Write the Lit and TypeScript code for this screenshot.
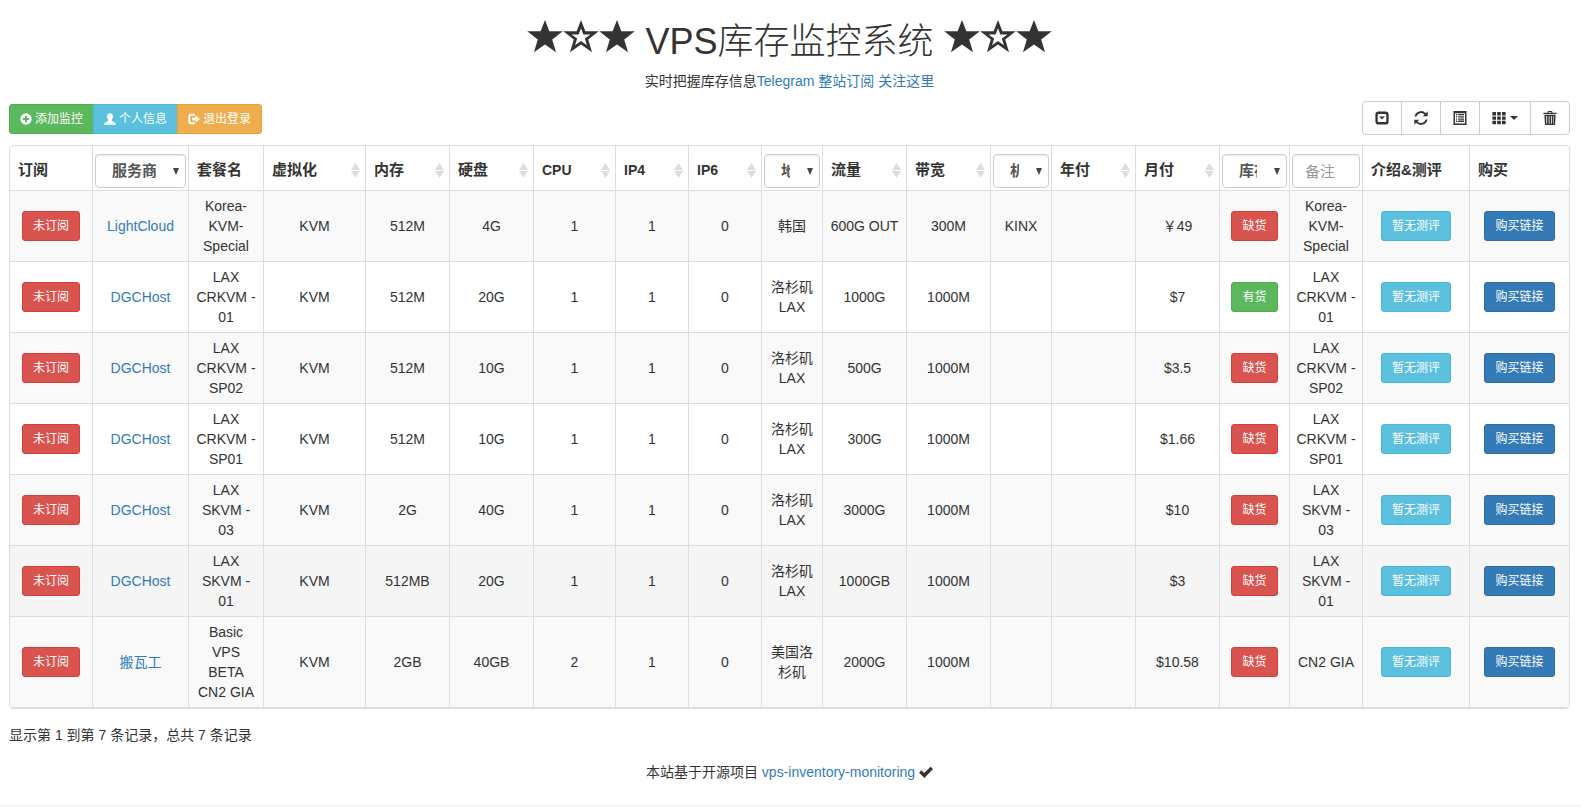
import { LitElement, html, css, svg } from "lit";
import { customElement } from "lit/decorators.js";
import { classMap } from "lit/directives/class-map.js";

interface Plan {
  vendor: string;
  name: string;
  ram: string;
  disk: string;
  cpu: string;
  place: string;
  traffic: string;
  speed: string;
  room: string;
  monthly: string;
  inStock: boolean;
}

const plans: Plan[] = [
  { vendor: "LightCloud", name: "Korea-KVM-Special", ram: "512M", disk: "4G", cpu: "1", place: "韩国", traffic: "600G OUT", speed: "300M", room: "KINX", monthly: "￥49", inStock: false },
  { vendor: "DGCHost", name: "LAX CRKVM - 01", ram: "512M", disk: "20G", cpu: "1", place: "洛杉矶 LAX", traffic: "1000G", speed: "1000M", room: "", monthly: "$7", inStock: true },
  { vendor: "DGCHost", name: "LAX CRKVM - SP02", ram: "512M", disk: "10G", cpu: "1", place: "洛杉矶 LAX", traffic: "500G", speed: "1000M", room: "", monthly: "$3.5", inStock: false },
  { vendor: "DGCHost", name: "LAX CRKVM - SP01", ram: "512M", disk: "10G", cpu: "1", place: "洛杉矶 LAX", traffic: "300G", speed: "1000M", room: "", monthly: "$1.66", inStock: false },
  { vendor: "DGCHost", name: "LAX SKVM - 03", ram: "2G", disk: "40G", cpu: "1", place: "洛杉矶 LAX", traffic: "3000G", speed: "1000M", room: "", monthly: "$10", inStock: false },
  { vendor: "DGCHost", name: "LAX SKVM - 01", ram: "512MB", disk: "20G", cpu: "1", place: "洛杉矶 LAX", traffic: "1000GB", speed: "1000M", room: "", monthly: "$3", inStock: false },
  { vendor: "搬瓦工", name: "Basic VPS BETA CN2 GIA", ram: "2GB", disk: "40GB", cpu: "2", place: "美国洛杉矶", traffic: "2000G", speed: "1000M", room: "", monthly: "$10.58", inStock: false },
];

const notes: Record<string, string> = { "Basic VPS BETA CN2 GIA": "CN2 GIA" };

type Kind = "text" | "sort" | "select" | "input";
const columns: { label: string; kind: Kind; width: number }[] = [
  { label: "订阅", kind: "text", width: 83 },
  { label: "服务商", kind: "select", width: 96 },
  { label: "套餐名", kind: "text", width: 75 },
  { label: "虚拟化", kind: "sort", width: 102 },
  { label: "内存", kind: "sort", width: 84 },
  { label: "硬盘", kind: "sort", width: 84 },
  { label: "CPU", kind: "sort", width: 82 },
  { label: "IP4", kind: "sort", width: 73 },
  { label: "IP6", kind: "sort", width: 73 },
  { label: "地区", kind: "select", width: 61 },
  { label: "流量", kind: "sort", width: 84 },
  { label: "带宽", kind: "sort", width: 84 },
  { label: "机房", kind: "select", width: 61 },
  { label: "年付", kind: "sort", width: 84 },
  { label: "月付", kind: "sort", width: 84 },
  { label: "库存", kind: "select", width: 70 },
  { label: "备注", kind: "input", width: 73 },
  { label: "介绍&测评", kind: "text", width: 107 },
  { label: "购买", kind: "text", width: 99 },
];

// Glyphs are drawn on a 14-unit square.
const glyphs = {
  plus: svg`<path fill-rule="evenodd" d="M7 .4a6.6 6.6 0 1 0 0 13.2A6.6 6.6 0 0 0 7 .4zM5.8 3.4h2.4v2.4h2.4v2.4H8.2v2.4H5.8V8.2H3.400V5.800H5.800z"/>`,
  user: svg`<path d="M7 .2C5 .2 3.500 1.700 3.500 3.900c0 1.500.6 3 1.500 3.900.2.700.1 1.300-.5 1.600L1.300 11c-.8.4-1.100.8-1.100 1.500v1.200h13.600v-1.200c0-.7-.3-1.100-1.100-1.500L9.500 9.400c-.6-.3-.7-.9-.5-1.600.9-.9 1.500-2.400 1.500-3.900C10.500 1.700 9 .2 7 .2z"/>`,
  logout: svg`<path d="M8 1H3.200A2.700 2.700 0 0 0 .4 3.700v6.600A2.700 2.700 0 0 0 3.200 13H8v-2.200H3.500a.9.9 0 0 1-.9-.9V4.100c0-.5.4-.9.9-.9H8z"/><path d="M9 2.600 13.900 7 9 11.400V8.700H5V5.300h4z"/>`,
  collapse: svg`<path fill-rule="evenodd" d="M3.500.4h7a3.100 3.100 0 0 1 3.100 3.100v7a3.100 3.100 0 0 1-3.100 3.100h-7A3.100 3.100 0 0 1 .4 10.500v-7A3.100 3.100 0 0 1 3.500.4zM3.600 3a.9.9 0 0 0-.9.9v6.300c0 .5.4.9.9.9h6.800c.5 0 .9-.4.9-.9V3.900a.9.9 0 0 0-.9-.9z"/><path d="M4.200 5.400h5.600L7 8.600z"/>`,
  refresh: svg`<path d="M13.700.3v5H8.800l1.700-1.700A4.800 4.800 0 0 0 2.400 5.600H.5A6.700 6.700 0 0 1 11.900 2.200zM.3 13.700v-5h4.900l-1.700 1.700a4.800 4.800 0 0 0 8.100-2h1.900A6.700 6.700 0 0 1 2.100 11.800z"/>`,
  list: svg`<path fill-rule="evenodd" d="M.5 0h13v14H.5zM2 2.200v10.300h10V2.200z"/><path d="M3 3h1.200v1.300H3zm0 2.200h1.200v1.300H3zm0 2.200h1.200v1.300H3zm0 2.200h1.200v1.300H3zM5.200 3H11v1.300H5.200zm0 2.200H11v1.300H5.200zm0 2.200H11v1.300H5.200zm0 2.200H11v1.300H5.200z"/>`,
  grid: svg`<path d="M.4 1h3.600v3.400H.4zm4.800 0h3.600v3.400H5.200zM10 1h3.600v3.400H10zM.4 5.400h3.600v3.400H.4zm4.800 0h3.600v3.400H5.200zm4.800 0h3.600v3.400H10zM.4 9.800h3.600v3.400H.4zm4.800 0h3.600v3.400H5.200zm4.800 0h3.600v3.400H10z"/>`,
  trash: svg`<path fill-rule="evenodd" d="M4.600 1.800V.9c0-.5.4-.9.9-.9h3c.5 0 .9.400.9.900v.9H13c.4 0 .7.300.7.700v.6H.3v-.6c0-.4.3-.7.7-.7zm1.100 0h2.600V1H5.700z"/><path fill-rule="evenodd" d="M1.400 3.800h11.200l-.5 9.400a.9.9 0 0 1-.9.8H2.800a.9.9 0 0 1-.9-.8zM3.200 5l.2 7.800h.7V5zm2.500 0v7.800h.8V5zm2.500 0v7.800h.8V5zm2.200 0-.1 7.800h.5L11 5z"/>`,
  check: svg`<path d="M.1 7.800 2.400 5.300 5.200 7.900l6.400-6.200 2.400 2.400-8.600 8.800z"/>`,
  star: svg`<path d="M7 0l1.700 4.400h5.200L9.800 7.600l1.500 4.900L7 9.500l-4.300 3 1.500-4.900L.1 4.400h5.200z"/>`,
  starEmpty: svg`<path fill-rule="evenodd" d="M7 0l1.700 4.400h5.200L9.800 7.600l1.500 4.900L7 9.500l-4.300 3 1.500-4.900L.1 4.400h5.200zM7 3.200l-.9 2.400H3.300l2.200 1.600-.8 2.600L7 8.200l2.300 1.600-.8-2.600 2.200-1.600H7.900z"/>`,
};

const icon = (name: keyof typeof glyphs, size: string) =>
  html`<svg class=${"icon " + size} viewBox="0 0 14 14" aria-hidden="true">${glyphs[name]}</svg>`;

@customElement("app-root")
export class AppRoot extends LitElement {
  static styles = css`
    :host {
      display: block;
      font: 14px/20px "Liberation Sans", "Noto Sans CJK SC", sans-serif;
      color: #333;
      background: #fff;
    }
    * {
      box-sizing: border-box;
    }
    .page {
      padding: 20px 11px 0 9px;
    }
    a {
      color: #337ab7;
      text-decoration: none;
    }
    .icon {
      fill: currentColor;
      flex: none;
      width: 14px;
      height: 14px;
    }
    .icon.small {
      width: 12px;
      height: 12px;
    }
    .icon.large {
      width: 36px;
      height: 36px;
    }
    .icon.inline {
      vertical-align: -2px;
    }
    .title {
      display: flex;
      justify-content: center;
      gap: 10px;
      margin: 0 0 7px;
      font-size: 36px;
      line-height: 44px;
      font-weight: 300;
      white-space: nowrap;
    }
    .stars {
      display: flex;
    }
    .center {
      margin: 0;
      text-align: center;
    }
    .toolbar {
      display: flex;
      justify-content: space-between;
      align-items: flex-start;
      margin: 10px 0;
    }
    .group {
      display: flex;
    }
    .actions {
      margin-top: 3px;
    }
    .btn {
      display: inline-flex;
      align-items: center;
      justify-content: center;
      gap: 3px;
      height: 30px;
      margin: 0;
      padding: 0 10px;
      border: 1px solid;
      border-radius: 3px;
      font: 12px/18px "Liberation Sans", "Noto Sans CJK SC", sans-serif;
      color: #fff;
      white-space: nowrap;
      vertical-align: middle;
      cursor: pointer;
    }
    .danger {
      background: #d9534f;
      border-color: #d43f3a;
    }
    .success {
      background: #5cb85c;
      border-color: #4cae4c;
    }
    .info {
      background: #5bc0de;
      border-color: #46b8da;
    }
    .warning {
      background: #f0ad4e;
      border-color: #eea236;
    }
    .primary {
      background: #337ab7;
      border-color: #2e6da4;
    }
    .tool {
      height: 34px;
      padding: 0 12px;
      gap: 4px;
      border-color: #ccc;
      border-radius: 4px;
      background: #fff;
      color: #333;
    }
    .group .btn + .btn {
      margin-left: -1px;
      border-top-left-radius: 0;
      border-bottom-left-radius: 0;
    }
    .group .btn:not(:last-child) {
      border-top-right-radius: 0;
      border-bottom-right-radius: 0;
    }
    .caret {
      border: 4px solid transparent;
      border-top-color: currentColor;
      border-bottom: 0;
    }
    .frame {
      border: 1px solid #ddd;
      border-radius: 4px;
      overflow: hidden;
    }
    table {
      width: 100%;
      table-layout: fixed;
      border-collapse: separate;
      border-spacing: 0;
    }
    th,
    td {
      border: solid #ddd;
      border-width: 0 1px 1px 0;
    }
    th:last-child,
    td:last-child {
      border-right-width: 0;
    }
    th {
      padding: 0;
      text-align: left;
      vertical-align: bottom;
    }
    td {
      padding: 5px;
      text-align: center;
      vertical-align: middle;
    }
    tbody tr:nth-child(odd) {
      background: #f9f9f9;
    }
    tbody tr.active {
      background: #f5f5f5;
    }
    .head {
      display: flex;
      align-items: center;
      justify-content: space-between;
      padding: 0 5px 10px 8px;
      font-size: 15px;
      white-space: nowrap;
    }
    .head.latin {
      font-size: 14px;
    }
    .arrows {
      width: 9px;
      height: 15px;
      fill: #ddd;
    }
    .filter {
      padding: 8px 2px 2px;
    }
    .field {
      display: block;
      width: 100%;
      height: 34px;
      margin: 0;
      padding: 0 12px;
      border: 1px solid #ccc;
      border-radius: 4px;
      box-shadow: inset 0 1px 1px rgba(0, 0, 0, 0.075);
      font: 15px/20px "Liberation Sans", "Noto Sans CJK SC", sans-serif;
      color: #555;
      background-color: #fff;
    }
    .field::placeholder {
      color: #999;
      opacity: 1;
    }
    select.field {
      appearance: none;
      font-weight: bold;
      padding: 0 29px 0 16px;
      background-image: url("data:image/svg+xml,%3Csvg xmlns='http://www.w3.org/2000/svg' width='6' height='7'%3E%3Cpath d='M0 0h6L3 7z' fill='%23444'/%3E%3C/svg%3E");
      background-repeat: no-repeat;
      background-position: right 6px center;
    }
    .summary {
      margin: 16px 0 17px;
    }
    .rule {
      margin: 23px 0 0;
      border: 0;
      border-top: 1px solid #eee;
    }
  `;

  private header(c: (typeof columns)[number]) {
    if (c.kind === "select") {
      return html`<div class="filter">
        <select class="field" aria-label=${c.label}>
          <option>${c.label}</option>
        </select>
      </div>`;
    }
    if (c.kind === "input") {
      return html`<div class="filter">
        <input class="field" type="text" aria-label=${c.label} placeholder=${c.label} />
      </div>`;
    }
    return html`<div class=${classMap({ head: true, latin: /^[A-Z]/.test(c.label) })}>
      <span>${c.label}</span>
      ${c.kind === "sort"
        ? html`<svg class="arrows" viewBox="0 0 9 15" aria-hidden="true"><path d="M0 7 4.500 0 9 7zM0 8h9l-4.500 7z" /></svg>`
        : null}
    </div>`;
  }

  private row(p: Plan, i: number) {
    return html`<tr class=${classMap({ active: i === 5 })}>
      <td><button class="btn danger" type="button">未订阅</button></td>
      <td><a href="#">${p.vendor}</a></td>
      <td>${p.name}</td>
      <td>KVM</td>
      <td>${p.ram}</td>
      <td>${p.disk}</td>
      <td>${p.cpu}</td>
      <td>1</td>
      <td>0</td>
      <td>${p.place}</td>
      <td>${p.traffic}</td>
      <td>${p.speed}</td>
      <td>${p.room}</td>
      <td></td>
      <td>${p.monthly}</td>
      <td>
        <button class=${classMap({ btn: true, success: p.inStock, danger: !p.inStock })} type="button">${p.inStock ? "有货" : "缺货"}</button>
      </td>
      <td>${notes[p.name] ?? p.name}</td>
      <td><a class="btn info" href="#">暂无测评</a></td>
      <td><a class="btn primary" href="#">购买链接</a></td>
    </tr>`;
  }

  private stars() {
    return html`<span class="stars">${icon("star", "large")}${icon("starEmpty", "large")}${icon("star", "large")}</span>`;
  }

  render() {
    return html`
      <main class="page">
        <h1 class="title">${this.stars()}<span>VPS库存监控系统</span>${this.stars()}</h1>
        <p class="center">实时把握库存信息<a href="#">Telegram 整站订阅</a> <a href="#">关注这里</a></p>
        <div class="toolbar">
          <div class="group actions">
            <button class="btn success" type="button">${icon("plus", "small")}添加监控</button>
            <button class="btn info" type="button">${icon("user", "small")}个人信息</button>
            <button class="btn warning" type="button">${icon("logout", "small")}退出登录</button>
          </div>
          <div class="group">
            <button class="btn tool" type="button" aria-label="分页">${icon("collapse", "")}</button>
            <button class="btn tool" type="button" aria-label="刷新">${icon("refresh", "")}</button>
            <button class="btn tool" type="button" aria-label="切换">${icon("list", "")}</button>
            <button class="btn tool" type="button" aria-label="列">${icon("grid", "")}<span class="caret"></span></button>
            <button class="btn tool" type="button" aria-label="清空">${icon("trash", "")}</button>
          </div>
        </div>
        <div class="frame">
          <table>
            <colgroup>
              ${columns.map((c) => html`<col style="width:${c.width}px" />`)}
            </colgroup>
            <thead>
              <tr>
                ${columns.map((c) => html`<th scope="col">${this.header(c)}</th>`)}
              </tr>
            </thead>
            <tbody>
              ${plans.map((p, i) => this.row(p, i))}
            </tbody>
          </table>
        </div>
        <p class="summary">显示第 1 到第 7 条记录，总共 7 条记录</p>
        <p class="center">本站基于开源项目 <a href="#">vps-inventory-monitoring</a> ${icon("check", "inline")}</p>
      </main>
      <hr class="rule" />
    `;
  }
}
